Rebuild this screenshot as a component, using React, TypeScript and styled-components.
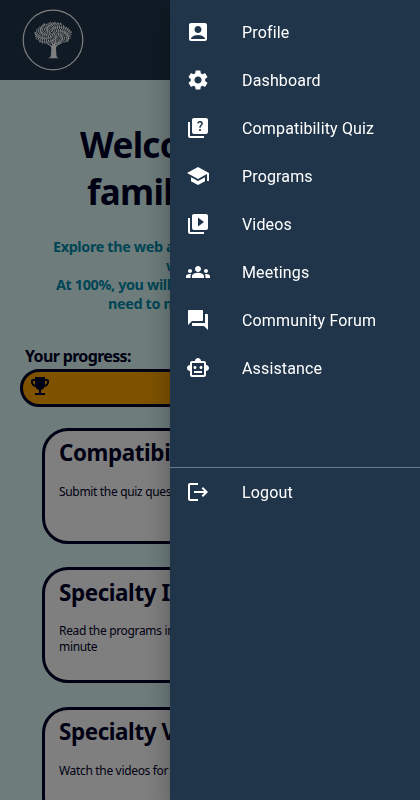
import React from "react";
import styled, { createGlobalStyle } from "styled-components";
import {
  MdAccountBox,
  MdSettings,
  MdQuiz,
  MdSchool,
  MdVideoLibrary,
  MdGroups,
  MdQuestionAnswer,
  MdOutlineSmartToy,
  MdLogout,
  MdEmojiEvents,
} from "react-icons/md";

const GlobalStyle = createGlobalStyle`
  * { box-sizing: border-box; }
  html, body { margin: 0; height: 100%; overflow: hidden; }
`;

const Page = styled.div`
  height: 800px;
  overflow: hidden;
  background: #dcfbf9;
  color: #000028;
  font-family: "Noto Sans", sans-serif;
`;

const Header = styled.header`
  height: 80px;
  padding: 9px 22px;
  background: #20354a;
`;

const Welcome = styled.h1`
  margin: 0;
  padding-top: 41px;
  font-size: 35px;
  line-height: 47px;
  font-weight: 700;
  letter-spacing: -0.7px;
  white-space: nowrap;
`;

const Line = styled.span<{ $indent: number }>`
  display: block;
  padding-left: ${(p) => p.$indent}px;
`;

const Intro = styled.p`
  margin: 0;
  padding-top: 22px;
  color: #008aaa;
  font-size: 14.4px;
  line-height: 19px;
  font-weight: 700;
  letter-spacing: -0.37px;
  white-space: nowrap;
`;

const ProgressLabel = styled.h2`
  margin: 0;
  padding: 32px 0 0 25px;
  font-size: 16px;
  line-height: 22px;
  font-weight: 700;
  letter-spacing: -0.65px;
`;

const ProgressBar = styled.div`
  display: flex;
  align-items: center;
  height: 38px;
  margin: 2px 20px 0;
  padding: 0 5px 4px;
  border: 3px solid #000028;
  border-radius: 19px;
  background: orange;
`;

const Cards = styled.div`
  display: flex;
  flex-direction: column;
  gap: 23.5px;
  padding: 20.8px 42px 0;
`;

const Card = styled.article`
  flex: none;
  height: 116px;
  padding: 7.6px 14px;
  border: 3px solid #000028;
  border-radius: 26px;
  background: #fff;
`;

const CardTitle = styled.h3`
  margin: 0;
  font-size: 22.4px;
  line-height: 30px;
  font-weight: 700;
  letter-spacing: -0.4px;
  white-space: nowrap;
`;

const CardText = styled.p`
  margin: 15.6px 0 0;
  font-size: 12px;
  line-height: 16px;
  letter-spacing: -0.33px;
  white-space: pre-line;
`;

const Backdrop = styled.div`
  position: fixed;
  inset: 0;
  background: rgba(0, 0, 0, 0.5);
`;

const Drawer = styled.aside`
  position: fixed;
  top: 0;
  right: 0;
  bottom: 0;
  width: 250px;
  background: #20354a;
  color: #fff;
  box-shadow:
    0 8px 10px -5px rgba(0, 0, 0, 0.2),
    0 16px 24px 2px rgba(0, 0, 0, 0.14),
    0 6px 30px 5px rgba(0, 0, 0, 0.12);
`;

const Menu = styled.ul`
  list-style: none;
  margin: 0;
  padding: 8px 0 75px;
`;

const Footer = styled(Menu)`
  padding: 0;
  border-top: 1px solid #6d7b87;
`;

const MenuItem = styled.li`
  display: flex;
  align-items: center;
  height: 48px;
  padding: 0 16px;
  font: 400 16px/24px Roboto, sans-serif;
  white-space: nowrap;

  svg {
    flex: none;
    margin-right: 32px;
    font-size: 24px;
  }
`;

const MenuLabel = styled.span`
  padding-top: 2px;
  letter-spacing: 0.15px;
`;

const items = [
  { label: "Profile", Icon: MdAccountBox },
  { label: "Dashboard", Icon: MdSettings },
  { label: "Compatibility Quiz", Icon: MdQuiz },
  { label: "Programs", Icon: MdSchool },
  { label: "Videos", Icon: MdVideoLibrary },
  { label: "Meetings", Icon: MdGroups },
  { label: "Community Forum", Icon: MdQuestionAnswer },
  { label: "Assistance", Icon: MdOutlineSmartToy },
];

const cards = [
  { title: "Compatibility Quiz", text: "Submit the quiz questions" },
  { title: "Specialty Info", text: "Read the programs info for at least one\nminute" },
  { title: "Specialty Videos", text: "Watch the videos for one minute" },
];

// Leaf clusters scattered evenly over the crown of the tree.
const leaves = Array.from({ length: 250 }, (_, i) => {
  const r = Math.sqrt((i + 0.5) / 250);
  const a = i * 2.39996;
  return {
    x: 31 + Math.cos(a) * r * 18.5,
    y: 24 + Math.sin(a) * r * 11 + Math.abs(Math.cos(a)) * r * 1.6,
  };
});

function TreeLogo() {
  return (
    <svg width="62" height="62" viewBox="0 0 62 62" fill="none">
      <circle cx="31" cy="31" r="29.8" stroke="#fff" strokeWidth="1.2" />
      {leaves.map((l, i) => (
        <circle key={i} cx={l.x} cy={l.y} r={i % 3 ? 0.65 : 0.9} fill="#fff" />
      ))}
      <path
        d="M26 49.3c2-.5 2.700-1.300 3-3.300l.3-7c0-1.900-3.300-3.900-7.300-4.700 4 .1 6.500 1.200 8.200 2.800L29.500 31l2.100 4.600 2.400-5.100-.7 5.800c2.100-1.800 4.200-2.200 8.200-2.800-3.700 1.400-7.300 3.200-7.500 5.500l.4 7c.3 2 .8 2.800 2.600 3.300z"
        fill="#fff"
      />
    </svg>
  );
}

export default function App() {
  return (
    <>
      <GlobalStyle />
      <Page>
        <Header>
          <TreeLogo />
        </Header>
        <Welcome>
          <Line $indent={80}>Welcome to our</Line>
          <Line $indent={87}>family, friend!</Line>
        </Welcome>
        <Intro>
          <Line $indent={53}>Explore the web app to complete your</Line>
          <Line $indent={166}>whole progress.</Line>
          <Line $indent={56}>At 100%, you will have everything you</Line>
          <Line $indent={108}>need to meet your match.</Line>
        </Intro>
        <ProgressLabel>Your progress:</ProgressLabel>
        <ProgressBar>
          <MdEmojiEvents size={24} />
        </ProgressBar>
        <Cards>
          {cards.map((c) => (
            <Card key={c.title}>
              <CardTitle>{c.title}</CardTitle>
              <CardText>{c.text}</CardText>
            </Card>
          ))}
        </Cards>
      </Page>
      <Backdrop />
      <Drawer>
        <Menu>
          {items.map(({ label, Icon }) => (
            <MenuItem key={label}>
              <Icon />
              <MenuLabel>{label}</MenuLabel>
            </MenuItem>
          ))}
        </Menu>
        <Footer>
          <MenuItem>
            <MdLogout />
            <MenuLabel>Logout</MenuLabel>
          </MenuItem>
        </Footer>
      </Drawer>
    </>
  );
}
